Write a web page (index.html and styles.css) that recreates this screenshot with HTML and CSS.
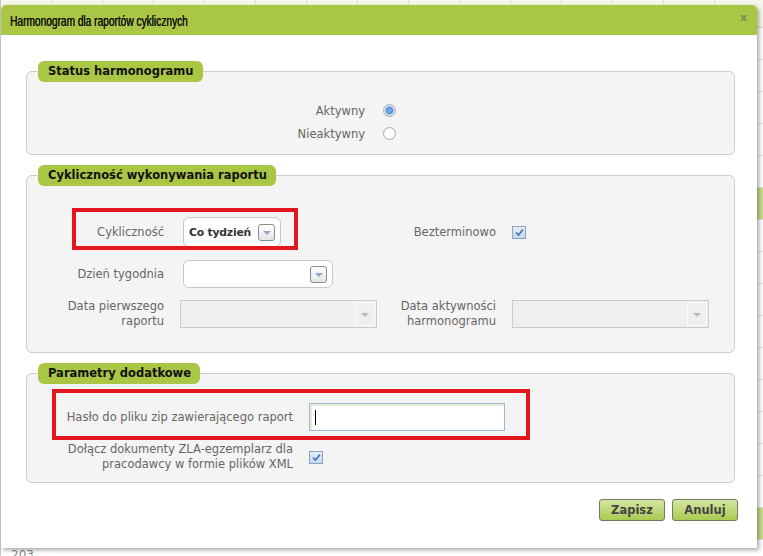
FILE: index.html
```html
<!DOCTYPE html>
<html lang="pl">
<head>
    <meta charset="UTF-8">
    <meta name="viewport" content="width=device-width, initial-scale=1.0">
    <title>Harmonogram dla raportów cyklicznych</title>
    <link rel="stylesheet" href="styles.css">
</head>
<body>
    <!-- page behind the dialog -->
    <div class="page">
        <div class="page-head"></div>
        <div class="page-row"></div>
        <div class="page-row"></div>
        <div class="page-row"></div>
        <div class="page-row"></div>
        <div class="page-row"></div>
        <div class="page-row green"></div>
        <div class="page-row"></div>
        <div class="page-row"></div>
        <div class="page-row"></div>
        <div class="page-row"></div>
        <div class="page-row"></div>
        <div class="page-row"></div>
        <div class="page-row"></div>
        <div class="page-row"></div>
        <div class="page-row"></div>
        <div class="page-row green"></div>
        <div class="page-row"><span class="page-num">203</span></div>
    </div>

    <div class="dialog">
        <div class="dialog-title">
            <span class="title-text">Harmonogram dla raportów cyklicznych</span>
            <span class="close">x</span>
        </div>

        <div class="dialog-body">
            <!-- Status -->
            <fieldset class="group">
                <legend>Status harmonogramu</legend>
                <div class="status-grid">
                    <label>Aktywny</label>
                    <span class="radio checked"></span>
                    <label>Nieaktywny</label>
                    <span class="radio"></span>
                </div>
            </fieldset>

            <!-- Cyklicznosc -->
            <fieldset class="group">
                <legend>Cykliczność wykonywania raportu</legend>
                <div class="cycle-grid">
                    <label>Cykliczność</label>
                    <div class="select select-short">
                        <span class="select-value">Co tydzień</span>
                        <span class="select-btn"><i class="arrow"></i></span>
                    </div>
                    <label>Bezterminowo</label>
                    <span class="checkbox">
                        <svg width="11" height="11" viewBox="0 0 11 11"><path d="M2 5.5 L4.5 8 L9 2.5" fill="none" stroke="#3f73b6" stroke-width="1.7"/></svg>
                    </span>

                    <label class="row2">Dzień tygodnia</label>
                    <div class="select select-wide row2">
                        <span class="select-value"></span>
                        <span class="select-btn"><i class="arrow"></i></span>
                    </div>
                    <span></span>
                    <span></span>

                    <label class="two-line">Data pierwszego<br>raportu</label>
                    <div class="date"><span class="date-btn"><i class="arrow grey"></i></span></div>
                    <label class="two-line">Data aktywności<br>harmonogramu</label>
                    <div class="date"><span class="date-btn"><i class="arrow grey"></i></span></div>
                </div>
            </fieldset>

            <!-- Parametry -->
            <fieldset class="group">
                <legend>Parametry dodatkowe</legend>
                <div class="extra-grid">
                    <label>Hasło do pliku zip zawierającego raport</label>
                    <div class="text-input"><span class="caret"></span></div>
                    <label class="two-line">Dołącz dokumenty ZLA-egzemplarz dla<br>pracodawcy w formie plików XML</label>
                    <span class="checkbox">
                        <svg width="11" height="11" viewBox="0 0 11 11"><path d="M2 5.5 L4.5 8 L9 2.5" fill="none" stroke="#3f73b6" stroke-width="1.7"/></svg>
                    </span>
                </div>
            </fieldset>

            <div class="actions">
                <button class="btn">Zapisz</button>
                <button class="btn">Anuluj</button>
            </div>
        </div>

        <!-- highlight annotations -->
        <div class="mark mark-cycle"></div>
        <div class="mark mark-pass"></div>
    </div>
</body>
</html>
```

FILE: styles.css
```css
:root {
    --green: #a9c745;
    --label: #666666;
    --border: #cccccc;
    --red: #e3161f;
}

* {
    box-sizing: border-box;
}

body {
    margin: 0;
    width: 763px;
    height: 556px;
    overflow: hidden;
    position: relative;
    background: #fafafa;
    font-family: "DejaVu Sans", Verdana, sans-serif;
}

/* Page behind */
.page {
    border-left: 1px solid #c8c8c8;
    height: 100%;
}

.page-head {
    height: 28px;
    background: #f4f7ea repeating-linear-gradient(90deg, transparent 0 50px, #dfe3d2 50px 51px);
    border-bottom: 1px solid #dcdcdc;
}

.page-row {
    height: 32px;
    border-bottom: 1px solid #e2e2e2;
    background: #ffffff;
}

.page-row.green {
    background: #c8dc8f;
}

.page-num {
    display: block;
    padding: 8px 0 0 10px;
    font-size: 12px;
    color: #888;
}

/* Dialog */
.dialog {
    position: absolute;
    left: 1px;
    top: 5px;
    width: 756px;
    height: 543px;
    background: #ffffff;
    border-radius: 5px 5px 0 0;
    box-shadow: 2px 2px 4px rgba(0, 0, 0, 0.35);
}

.dialog-title {
    height: 30px;
    background: var(--green);
    border-radius: 5px 5px 0 0;
    display: flex;
    justify-content: space-between;
    align-items: center;
    padding: 0 10px 0 9px;
    color: #111;
}

.title-text {
    font-family: "Liberation Sans", Arial, sans-serif;
    font-size: 14.5px;
    transform: scaleX(0.7);
    transform-origin: left center;
    text-shadow: 0.4px 0 0 #111;
    white-space: nowrap;
    margin-top: 1px;
}

.close {
    font-family: "DejaVu Sans", sans-serif;
    font-weight: bold;
    font-size: 11px;
    color: #6f8f58;
    margin-top: -6px;
}

.dialog-body {
    padding: 26px 22px 0 25px;
}

/* Fieldsets */
.group {
    margin: 0 0 10px;
    padding: 0 0 0 11px;
    border: 1px solid var(--border);
    border-radius: 6px;
    background: #f4f4f4;
    min-width: 0;
}

.group legend {
    height: 21px;
    line-height: 21px;
    padding: 0 9px 0 10px;
    background: var(--green);
    border-radius: 6px;
    font-weight: bold;
    font-size: 11.5px;
    color: #111;
}

label {
    color: var(--label);
    font-size: 11.5px;
    text-align: right;
    white-space: nowrap;
}

.two-line {
    line-height: 15px;
}

.status-grid {
    display: grid;
    grid-template-columns: 327px 13px;
    grid-auto-rows: 23px;
    column-gap: 18px;
    align-items: center;
    padding: 17px 0 9px;
}

.cycle-grid {
    display: grid;
    grid-template-columns: 126px 197px 103px 197px;
    grid-template-rows: 30px 29px 28px;
    column-gap: 16px;
    row-gap: 12px;
    align-items: center;
    padding: 31px 0 24px;
}

.cycle-grid .row2 {
    margin-top: 1px;
}

.extra-grid {
    display: grid;
    grid-template-columns: 255px 196px;
    grid-template-rows: 28px 30px;
    column-gap: 16px;
    row-gap: 11px;
    align-items: center;
    padding: 19px 0 10px;
}

/* Selects */
.select {
    height: 100%;
    margin-left: 3px;
    display: flex;
    justify-content: space-between;
    align-items: center;
    padding: 0 5px 0 5px;
    background: #ffffff;
    border: 1px solid #c8c8c8;
    border-radius: 6px;
}

.select-short {
    width: 98px;
}

.select-wide {
    width: 150px;
    height: 28px;
}

.select-value {
    font-weight: bold;
    font-size: 10.8px;
    letter-spacing: -0.2px;
    color: #333;
}

.select-btn {
    width: 17px;
    height: 17px;
    border: 1px solid #8c8c8c;
    border-radius: 3px;
    background: linear-gradient(#ffffff, #e4e4e4);
    display: flex;
    justify-content: center;
    align-items: center;
}

.arrow {
    width: 0;
    height: 0;
    border-left: 4px solid transparent;
    border-right: 4px solid transparent;
    border-top: 4px solid #8ea6cb;
    margin-top: 2px;
}

.arrow.grey {
    border-top-color: #b8b8b8;
}

.date {
    height: 28px;
    border: 1px solid #cbcbcb;
    background: #efefef;
    display: flex;
    justify-content: flex-end;
    padding: 1px;
}

.date-btn {
    width: 20px;
    border: 1px solid #fbfbfb;
    display: flex;
    justify-content: center;
    align-items: center;
}

/* Inputs */
.text-input {
    height: 28px;
    background: #ffffff;
    border: 1px solid #9fb7cc;
    box-shadow: inset 1px 1px 0 1px #e8eed6;
    display: flex;
    align-items: center;
    padding-left: 5px;
}

.caret {
    width: 1px;
    height: 15px;
    background: #000;
}

.checkbox {
    width: 14px;
    height: 13px;
    border: 1px solid #8ea3c0;
    background: linear-gradient(#e6eef9, #c5d7ee);
    display: flex;
    justify-content: center;
    align-items: center;
}

.radio {
    width: 13px;
    height: 13px;
    border-radius: 50%;
    border: 1px solid #a6adb9;
    background: radial-gradient(circle, #ffffff 0 50%, #e4e8ee 100%);
}

.radio.checked {
    background: radial-gradient(circle, #6fa6dc 0 2px, #4f8cc9 3px, #cfe0f2 4.5px, #f2f6fb 100%);
}

/* Buttons */
.actions {
    display: flex;
    justify-content: flex-end;
    gap: 7px;
    margin: 16px -3px 0 0;
}

.btn {
    height: 22px;
    width: 66px;
    border: 1px solid #707a62;
    border-radius: 3px;
    background: linear-gradient(#d4e7a3, #a9cb4f);
    font-family: "DejaVu Sans", sans-serif;
    font-weight: bold;
    font-size: 11.5px;
    color: #444;
    padding: 0;
}

/* Red annotation frames */
.mark {
    position: absolute;
    border: 4px solid var(--red);
}

.mark-cycle {
    left: 71px;
    top: 203px;
    width: 226px;
    height: 42px;
}

.mark-pass {
    left: 51px;
    top: 384px;
    width: 478px;
    height: 51px;
}
```
